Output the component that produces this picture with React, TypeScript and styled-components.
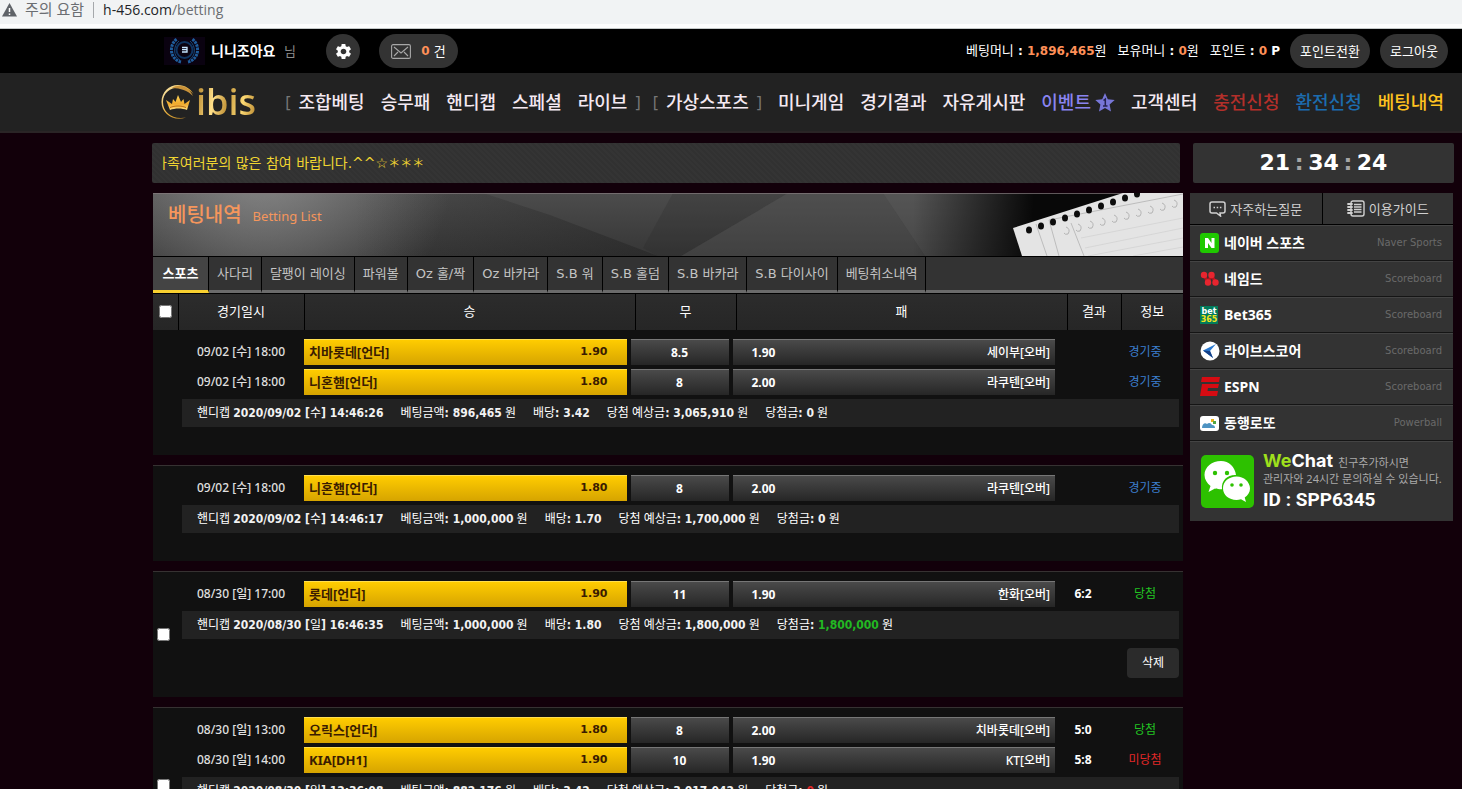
import React from "react";
import styled, { createGlobalStyle, css } from "styled-components";
import { MdSettings } from "react-icons/md";

const sans = `"Noto Sans", "Noto Sans CJK KR", sans-serif`;
const wide = `"DejaVu Sans", "Noto Sans CJK KR", sans-serif`;
const semiWide = `"DejaVu Sans Condensed", "Noto Sans CJK KR", sans-serif`;

const GlobalStyle = createGlobalStyle`
  * { box-sizing: border-box; }
  body {
    margin: 0;
    background: #12000a;
    color: #fff;
    font: 12px/16px ${sans};
  }
  button { font: inherit; color: inherit; border: 0; cursor: pointer; }
  a { color: inherit; text-decoration: none; }
  table { border-collapse: collapse; border-spacing: 0; }
  input[type="checkbox"] { width: 13px; height: 13px; margin: 0; display: block; }
`;

const Page = styled.div`
  height: 100vh;
  overflow: hidden;
  white-space: nowrap;
`;

/* ---------- address bar ---------- */

const AddressBar = styled.div`
  height: 29px;
  display: flex;
  align-items: center;
  padding: 0 0 9px 2px;
  background: linear-gradient(#f1f3f4 24px, #fdfdfd 24px);
  border-bottom: 1px solid #c4c8c8;
  color: #6b6e72;
  font-size: 14px;
  line-height: 19px;
`;

const Warning = styled.span`
  margin-left: 8px;
  padding-right: 9px;
  font-size: 15px;
`;

const Url = styled.span`
  border-left: 1px solid #a5a8ab;
  padding-left: 9px;
  line-height: 16px;
  font-family: "Open Sans", sans-serif;
  b { font-weight: 400; color: #222427; }
`;

/* ---------- top bar ---------- */

const TopBar = styled.div`
  height: 44px;
  display: flex;
  align-items: center;
  padding: 0 14px 0 164px;
  background: #000;
  font-size: 13px;
`;

const UserName = styled.div`
  margin-left: 6px;
  width: 115px;
  font-size: 14px;
  b { margin-right: 5px; }
  span { font-size: 13px; color: #8c8c8c; }
`;

const Pill = styled.button<{ $w: number }>`
  height: 34px;
  width: ${(p) => p.$w}px;
  padding: 0;
  border-radius: 17px;
  background: #333;
  display: flex;
  align-items: center;
  justify-content: center;
  gap: 4px;
`;

const Mail = styled(Pill)`
  margin-left: 19px;
  svg { margin-right: 6px; }
`;

const Orange = styled.b`
  font-family: ${wide};
  font-size: 12px;
  color: #ff9058;
`;

const Money = styled.div`
  margin-left: auto;
  margin-right: 10px;
  display: flex;
  gap: 11px;
  font-family: ${wide};
  b { font-size: 12px; }
`;

const Exit = styled(Pill)`
  margin-left: 10px;
`;

/* ---------- navigation ---------- */

const NavBar = styled.div`
  height: 60px;
  display: flex;
  align-items: center;
  justify-content: space-between;
  padding: 0 18px 0 160px;
  background: #222;
  border-bottom: 2px solid #2a2526;
`;

const Logo = styled.a`
  display: flex;
  align-items: center;
  gap: 1px;
  span {
    font: 600 36px/44px "Open Sans", sans-serif;
    background: linear-gradient(100deg, #b98a2f 5%, #ffe08a 30%, #c79a3f 50%, #fbd873 75%, #b3812a);
    -webkit-background-clip: text;
    background-clip: text;
    color: transparent;
  }
`;

const Menu = styled.nav`
  display: flex;
  align-items: center;
  gap: 16px;
  font-size: 18px;
  line-height: 24px;
`;

const MenuGroup = styled.div`
  display: flex;
  gap: 16px;
  &::before { content: "["; margin-right: -8px; color: #777; font-size: 16px; }
  &::after { content: "]"; margin-left: -8px; color: #777; font-size: 16px; }
  & + & { margin-left: -4px; }
`;

const MenuLink = styled.a<{ $color?: string }>`
  display: flex;
  align-items: center;
  gap: 4px;
  font-weight: 500;
  color: ${(p) => p.$color ?? "#f4e9f2"};
`;

/* ---------- page body ---------- */

const Body = styled.main`
  padding: 10px 8px 0 152px;
`;

const TopRow = styled.div`
  display: flex;
  gap: 13px;
  height: 40px;
`;

const Notice = styled.div`
  flex: 1;
  min-width: 0;
  padding: 0 10px;
  display: flex;
  align-items: center;
  border-radius: 2px;
  background: repeating-linear-gradient(45deg, #313131 0 2px, #343434 2px 4px);
  color: #f0d531;
  font: 14px/20px ${wide};
`;

const Marquee = styled.div`
  overflow: hidden;
  flex: 1;
  span { margin-left: -8px; }
  small { font-size: 12px; }
`;

const Clock = styled.time`
  width: 261px;
  border-radius: 2px;
  background: #333;
  display: flex;
  align-items: center;
  justify-content: center;
  gap: 5px;
  font: bold 22px/26px ${wide};
  i { font-style: normal; color: #a5a5a5; width: 8px; display: flex; justify-content: center; }
`;

const Columns = styled.div`
  display: flex;
  align-items: flex-start;
  gap: 7px;
  padding: 10px 1px 0;
`;

const Content = styled.section`
  flex: 1;
  min-width: 0;
`;

const Banner = styled.header`
  position: relative;
  height: 63px;
  padding: 10px 15px;
  display: flex;
  align-items: flex-start;
  gap: 11px;
  color: #f5965c;
  overflow: hidden;
  background: #333;
  h1 { margin: 0; font-size: 20px; line-height: 24px; font-weight: 500; }
  p { margin: 0; font-size: 13px; line-height: 26px; }
  h1, p { position: relative; }
  svg { position: absolute; inset: 0; width: 100%; height: 100%; }
`;

const Tabs = styled.div`
  display: flex;
  height: 38px;
  border-top: 1px solid #000;
  border-bottom: 1px solid #000;
  background: linear-gradient(#333 33px, #6b6b6b 33px);
  font: 13px/16px ${wide};
`;

const Tab = styled.button<{ $active?: boolean }>`
  padding: 0 8px;
  background: transparent;
  border-right: 1px solid #000;
  border-bottom: 3px solid transparent;
  color: #c4c4c4;
  ${(p) =>
    p.$active &&
    css`
      min-width: 56px;
      background: #444;
      color: #fff;
      font-weight: 700;
      border-bottom-color: #f8d030;
    `}
`;

const HeadTable = styled.table`
  width: 100%;
  table-layout: fixed;
  background: linear-gradient(#2c2c2c, #262626);
  font-size: 13px;
  th {
    height: 36px;
    padding: 0 0 2px;
    font-weight: 400;
    border-right: 1px solid #000;
  }
  th:first-child { padding: 0 0 2px 6px; }
  th:last-child { border-right: 0; }
`;

const Col = styled.col<{ $w?: number }>`
  ${(p) => p.$w && `width: ${p.$w}px;`}
`;

const Bet = styled.article<{ $first?: boolean }>`
  display: flex;
  align-items: center;
  margin-bottom: 10px;
  padding: 9px 4px 0;
  border-top: ${(p) => (p.$first ? "0" : "1px solid #363232")};
  background: #111;
`;

const Picker = styled.div`
  width: 25px;
  flex: none;
  padding-bottom: 9px;
`;

const BetBody = styled.div`
  flex: 1;
  min-width: 0;
`;

const Games = styled.table`
  display: block;
  tbody { display: grid; gap: 4px; }
  tr {
    display: grid;
    grid-template-columns: 118px minmax(0, 1fr) 98px minmax(0, 1fr) 48px 68px;
    gap: 4px;
    height: 26px;
  }
  td {
    padding: 0;
    display: flex;
    align-items: center;
    justify-content: center;
  }
`;

const When = styled.td`
  && { justify-content: flex-start; padding-left: 15px; }
  font-weight: 500;
  color: #e0e0e0;
`;

const pickPadding = css<{ $away?: boolean }>`
  && { justify-content: space-between; padding: ${(p) => (p.$away ? "0 5px 0 19px" : "0 19px 2px 5px")}; }
`;

const Pick = styled.td<{ $away?: boolean }>`
  ${pickPadding}
  ${(p) =>
    p.$away
      ? css`
          background: linear-gradient(#4a4a4a, #262626);
          border-top: 1px solid #777;
          span { font-weight: 500; }
        `
      : css`
          background: linear-gradient(#ffcc00, #d6a400);
          border-top: 1px solid #ffdf50;
          color: #3a1c00;
          font-size: 13px;
          font-weight: 700;
          b { font-family: ${wide}; font-size: 11px; }
        `}
`;

const Draw = styled.td`
  background: linear-gradient(#4a4a4a, #262626);
  border-top: 1px solid #777;
  font-weight: 700;
`;

const Score = styled.td`
  font-weight: 700;
`;

const statusColor: Record<string, string> = { 경기중: "#3c7fd0", 당첨: "#22c322", 미당첨: "#e02828" };

const Status = styled.td<{ $status: string }>`
  color: ${(p) => statusColor[p.$status]};
`;

const Info = styled.div`
  display: flex;
  align-items: center;
  gap: 17px;
  height: 28px;
  margin-top: 4px;
  padding-left: 15px;
  background: #222;
`;

const Won = styled.b<{ $color?: string }>`
  font-family: ${semiWide};
  color: ${(p) => p.$color ?? "#f2f2f2"};
`;

const Footer = styled.div<{ $tall?: boolean }>`
  height: ${(p) => (p.$tall ? 58 : 28)}px;
  padding-top: 9px;
  display: flex;
  justify-content: flex-end;
  align-items: flex-start;
`;

const Delete = styled.button`
  width: 52px;
  height: 30px;
  border-radius: 4px;
  background: #2b2b2b;
`;

/* ---------- side column ---------- */

const Side = styled.aside`
  width: 263px;
  background: #333;
`;

const Help = styled.div`
  display: grid;
  grid-template-columns: 1fr 1fr;
  height: 32px;
  border-bottom: 1px solid #000;
  font-size: 13px;
  color: #d0d0d0;
`;

const HelpLink = styled.a`
  display: flex;
  align-items: center;
  justify-content: center;
  gap: 4px;
  & + & { border-left: 1px solid #000; }
`;

const SiteLink = styled.a`
  display: flex;
  align-items: center;
  gap: 4px;
  height: 36px;
  padding: 0 11px 0 10px;
  border-top: 1px solid #444;
  border-bottom: 1px solid #151515;
  b { font-size: 14px; }
  small { margin-left: auto; font: 10px/14px ${wide}; color: #6a6a6a; }
`;

const WeChat = styled.div`
  display: flex;
  align-items: center;
  gap: 9px;
  height: 80px;
  padding: 0 11px;
  border-top: 1px solid #444;
  color: #aaa;
  font-size: 11px;
  line-height: 16px;
`;

const Brand = styled.div`
  display: flex;
  align-items: baseline;
  gap: 5px;
  b { font: 700 18px/20px Inter, sans-serif; color: #fff; }
  b span { color: #9fe01c; }
`;

const WeId = styled.div`
  font: bold 19px/26px Roboto, sans-serif;
  color: #fff;
`;

/* ---------- drawings ---------- */

const Crest = () => (
  <svg width="41" height="28" viewBox="0 0 41 28">
    <rect width="41" height="28" fill="#0a0210" />
    <g fill="none" stroke="#1f5d9c">
      <circle cx="20.500" cy="13" r="8" strokeWidth="2" stroke="#0f3460" />
      <path d="M17 25C5 22 5 7 13 2M24 25C36 22 36 7 28 2" strokeWidth="3" strokeDasharray="2.500 .8" />
      <path d="M16 23C9 19 9 9 15 4M25 23C32 19 32 9 26 4" strokeWidth="1" stroke="#17497c" />
    </g>
    <path d="M18 10.500h5v4.500h-5M18 12.700h5" fill="none" stroke="#c7e6ff" strokeWidth="1.300" />
  </svg>
);

const Envelope = () => (
  <svg width="20" height="15" viewBox="0 0 20 15" fill="none" stroke="#a8a8a8" strokeWidth="1.100">
    <rect x=".6" y=".6" width="18.800" height="13.800" rx="1.500" />
    <path d="M3 3l7 6 7-6M3 12l4-4M17 12l-4-4" />
  </svg>
);

const Crown = () => (
  <svg width="35" height="36" viewBox="0 0 35 36">
    <defs>
      <linearGradient id="gold" x1="0" y1="0" x2="1" y2="1">
        <stop offset="0" stopColor="#fff3c0" />
        <stop offset=".5" stopColor="#e5ac3a" />
        <stop offset="1" stopColor="#9a6a1e" />
      </linearGradient>
      <linearGradient id="crown" x1="0" y1="0" x2="0" y2="1">
        <stop offset="0" stopColor="#ffd75a" />
        <stop offset=".6" stopColor="#f0a92c" />
        <stop offset="1" stopColor="#ffdf80" />
      </linearGradient>
    </defs>
    <path d="M26 33.500C14 38 1.500 30 1.500 18 1.500 8 9 1 18 1c7 0 13 4 15.500 9C29 5 24 3.500 19 3.500 10 3.500 3 9 3 18c0 10 9 18 23 15.500z" fill="url(#gold)" />
    <path d="M12 4c6-4 16-3 21 8-6-6-12-7.500-21-8z" fill="#c9923a" />
    <path d="M10 26L6 16l6 4 1-5 2.500 3L18 11l3 7 2.500-3 1 5 5.500-4-3 10c-5-2-12-2-17 0z" fill="url(#crown)" />
    <path d="M10 23.500c5-2 11-2 16 0" stroke="#b76b12" fill="none" />
  </svg>
);

const Star = () => (
  <svg width="20" height="19" viewBox="0 0 20 19">
    <path d="M10 0l2.800 6.200 6.900.8-5.100 4.600 1.400 6.800-6-3.400-6 3.400 1.400-6.800L.3 7l6.900-.8z" fill="#7877d8" />
    <path d="M8.500 7.500L10.300 6v7M8 13h4.500" stroke="#25234f" strokeWidth="1.500" fill="none" />
  </svg>
);

const Bubble = () => (
  <svg width="17" height="16" viewBox="0 0 17 16" fill="none" stroke="#d0d0d0" strokeWidth="1.500">
    <path d="M3 1h11a2 2 0 0 1 2 2v7a2 2 0 0 1-2 2h-3l.5 3-4-3H3a2 2 0 0 1-2-2V3a2 2 0 0 1 2-2z" />
    <path d="M4.500 6.500h8" strokeDasharray="1.500 1.700" />
  </svg>
);

const Notebook = () => (
  <svg width="18" height="17" viewBox="0 0 18 17" fill="none" stroke="#d0d0d0" strokeWidth="1.400">
    <rect x="4" y="1" width="13" height="15" rx="2" />
    <path d="M7 4.500h7.500M7 7h7.500M7 9.500h7.500M7 12h7.500" strokeWidth="1.400" />
    <path d="M1 4h4M1 7h4M1 10h4M1 13h4" strokeWidth="1.800" strokeLinecap="round" />
  </svg>
);

const PaperBanner = () => (
  <svg viewBox="0 0 1030 63" preserveAspectRatio="xMaxYMid slice" aria-hidden="true">
    <defs>
      <radialGradient id="glow" gradientUnits="userSpaceOnUse" cx="110" cy="-30" r="190">
        <stop offset="0" stopColor="#a0a0a0" stopOpacity=".7" />
        <stop offset="1" stopColor="#a0a0a0" stopOpacity="0" />
      </radialGradient>
      <linearGradient id="base" x1="0" y1="0" x2="0" y2="1">
        <stop offset="0" stopColor="#4c4c4c" />
        <stop offset="1" stopColor="#363636" />
      </linearGradient>
      <linearGradient id="night" x1="0" x2="1">
        <stop offset="0" stopColor="#000" stopOpacity="0" />
        <stop offset="1" stopColor="#000" stopOpacity=".9" />
      </linearGradient>
      <linearGradient id="shade" x1="0" x2="1">
        <stop offset="0" stopColor="#1c1c1c" stopOpacity="0" />
        <stop offset="1" stopColor="#1c1c1c" stopOpacity=".4" />
      </linearGradient>
    </defs>
    <rect width="1030" height="63" fill="url(#base)" />
    <rect width="1030" height="63" fill="url(#glow)" />
    <path d="M200 0h130L397 22 505 63H200z" fill="url(#shade)" />
    <path d="M528 63L635 0h95l42 63z" fill="#555" opacity=".35" />
    <path d="M730 0h150v63H772z" fill="#666" opacity=".35" />
    <path d="M505 63L528 63 635 0H520L490 55z" fill="#222" opacity=".2" />
    <rect x="760" width="120" height="63" fill="url(#night)" />
    <rect x="880" width="150" height="63" fill="#080808" />
    <rect width="1030" height="1" fill="#857b7d" opacity=".7" />
    <path d="M860 35L970 0h60v63H869z" fill="#e4e4e4" />
    <path d="M883 31l11 32M896 27l10 36M918 30l13 33M896 27L1030 1" stroke="#bcbcbc" fill="none" />
    <path d="M932 55l98-20M935 63l95-18M928 45l102-20M980 63l50-9" stroke="#d6d6d6" fill="none" />
    {[0, 1, 2, 3, 4, 5, 6, 7, 8, 9].map((i) => (
      <ellipse key={i} cx={876 + i * 12} cy={37 - i * 4} rx="3" ry="3.500" fill="#0c0c0c" />
    ))}
    {[0, 1, 2, 3, 4, 5, 6, 7, 8, 9].map((i) => (
      <path key={i} d={`M${913 + i * 12} ${34 - i * 3}q5 2 2 7q-3 1-4-1`} stroke="#b4b4b4" fill="none" />
    ))}
  </svg>
);

const Tile = ({ children }: { children: React.ReactNode }) => (
  <svg width="20" height="20" viewBox="0 0 20 20">{children}</svg>
);

const siteIcons = {
  naver: (
    <Tile>
      <rect width="19" height="20" rx="3" fill="#1fc800" />
      <path d="M5 15V5h3l3.500 5V5h3v10h-3L8 10v5z" fill="#fff" />
    </Tile>
  ),
  named: (
    <Tile>
      <path d="M4 6l4 7.500M11.500 6l4 7.500M8 13.500L11.500 6" stroke="#b5141e" strokeWidth="3" />
      <g fill="#e8252f">
        <circle cx="4" cy="6" r="3.200" />
        <circle cx="11.500" cy="6" r="3.200" />
        <circle cx="8" cy="13.500" r="3.200" />
        <circle cx="15.500" cy="13.500" r="3.200" />
      </g>
    </Tile>
  ),
  bet: (
    <Tile>
      <rect y="1" width="18" height="18" fill="#027b5b" />
      <text x="9" y="9" textAnchor="middle" fontFamily="DejaVu Sans" fontWeight="bold" fontSize="8" fill="#fff">bet</text>
      <text x="9" y="17" textAnchor="middle" fontFamily="DejaVu Sans" fontWeight="bold" fontSize="8" fill="#f2e21b">365</text>
    </Tile>
  ),
  live: (
    <Tile>
      <circle cx="10" cy="10" r="9.500" fill="#fff" />
      <path d="M16 3L3 9.500 13 17l-3-7z" fill="#2b7ad0" />
      <path d="M3 9.500L13 17l-3-7z" fill="#143f86" />
    </Tile>
  ),
  espn: (
    <Tile>
      <path d="M2 0h18l-1 5H1zM2 7h17l-1 4H8l-.5 3H18l-1 5H0z" fill="#d60b12" />
    </Tile>
  ),
  lotto: (
    <Tile>
      <rect y="3" width="19" height="15" rx="3" fill="#fff" />
      <path d="M2 15c0-4 3-6 5-4 2-2 4-1 5 1 2 0 3 1 3 3z" fill="#4e93c2" />
      <rect x="11" y="6" width="3" height="3" fill="#e7b21c" />
      <rect x="13" y="8" width="3" height="3" fill="#4fa545" />
    </Tile>
  ),
};

const WeChatIcon = () => (
  <svg width="53" height="53" viewBox="0 0 53 53">
    <rect width="53" height="53" rx="5" fill="#2dc100" />
    <path d="M20 6C11 6 3.500 12 3.500 20c0 4.500 2.500 8 6 11l-2 6 6.500-3.500c2 .6 4 .8 7 .8C20 25 27 19.500 35 20 34 12 28 6 20 6z" fill="#fff" />
    <path d="M35.500 21.500c-7.500 0-13.500 5-13.500 11.800S28 45 35.500 45c1.500 0 3-.3 4.500-.7l5 2.700-1.300-4.500c3.300-2.300 5.300-5.300 5.300-9C49 27 43 21.500 35.500 21.500z" fill="#fff" />
    <g fill="#2dc100">
      <circle cx="14" cy="18" r="2.200" />
      <circle cx="26" cy="18" r="2.200" />
      <circle cx="31" cy="30" r="1.800" />
      <circle cx="40" cy="30" r="1.800" />
    </g>
  </svg>
);

/* ---------- data ---------- */

const tabs = ["스포츠", "사다리", "달팽이 레이싱", "파워볼", "Oz 홀/짝", "Oz 바카라", "S.B 워", "S.B 홀덤", "S.B 바카라", "S.B 다이사이", "베팅취소내역"];

type Game = { date: string; day: string; time: string; home: string; homeOdds: string; draw: string; awayOdds: string; away: string; score?: string; status: string };
type BetData = { games: Game[]; date: string; day: string; time: string; stake: string; odds: string; expected: string; payout: string; color?: string; done?: boolean };

const g = (date: string, day: string, time: string, home: string, homeOdds: string, draw: string, awayOdds: string, away: string, status: string, score?: string): Game => ({
  date, day, time, home, homeOdds, draw, awayOdds, away, status, score,
});

const bets: BetData[] = [
  {
    games: [
      g("09/02", "수", "18:00", "치바롯데[언더]", "1.90", "8.5", "1.90", "세이부[오버]", "경기중"),
      g("09/02", "수", "18:00", "니혼햄[언더]", "1.80", "8", "2.00", "라쿠텐[오버]", "경기중"),
    ],
    date: "2020/09/02", day: "수", time: "14:46:26", stake: "896,465", odds: "3.42", expected: "3,065,910", payout: "0",
  },
  {
    games: [g("09/02", "수", "18:00", "니혼햄[언더]", "1.80", "8", "2.00", "라쿠텐[오버]", "경기중")],
    date: "2020/09/02", day: "수", time: "14:46:17", stake: "1,000,000", odds: "1.70", expected: "1,700,000", payout: "0",
  },
  {
    games: [g("08/30", "일", "17:00", "롯데[언더]", "1.90", "11", "1.90", "한화[오버]", "당첨", "6:2")],
    date: "2020/08/30", day: "일", time: "16:46:35", stake: "1,000,000", odds: "1.80", expected: "1,800,000", payout: "1,800,000", color: "#22b822", done: true,
  },
  {
    games: [
      g("08/30", "일", "13:00", "오릭스[언더]", "1.80", "8", "2.00", "치바롯데[오버]", "당첨", "5:0"),
      g("08/30", "일", "14:00", "KIA[DH1]", "1.90", "10", "1.90", "KT[오버]", "미당첨", "5:8"),
    ],
    date: "2020/08/30", day: "일", time: "12:36:08", stake: "882,176", odds: "3.42", expected: "3,017,042", payout: "0", color: "#e02828", done: true,
  },
];

const sites: [keyof typeof siteIcons, string, string][] = [
  ["naver", "네이버 스포츠", "Naver Sports"],
  ["named", "네임드", "Scoreboard"],
  ["bet", "Bet365", "Scoreboard"],
  ["live", "라이브스코어", "Scoreboard"],
  ["espn", "ESPN", "Scoreboard"],
  ["lotto", "동행로또", "Powerball"],
];

const BetCard = ({ bet, first }: { bet: BetData; first: boolean }) => (
  <Bet $first={first}>
    <Picker>{bet.done && <input type="checkbox" aria-label={`${bet.date} ${bet.time} 선택`} />}</Picker>
    <BetBody>
      <Games>
        <tbody>
          {bet.games.map((game, i) => (
            <tr key={i}>
              <When>{`${game.date} [${game.day}] ${game.time}`}</When>
              <Pick><span>{game.home}</span><b>{game.homeOdds}</b></Pick>
              <Draw>{game.draw}</Draw>
              <Pick $away><b>{game.awayOdds}</b><span>{game.away}</span></Pick>
              <Score>{game.score}</Score>
              <Status $status={game.status}>{game.status}</Status>
            </tr>
          ))}
        </tbody>
      </Games>
      <Info>
        <span>핸디캡 <Won>{bet.date} [</Won>{bet.day}<Won>] {bet.time}</Won></span>
        <span>베팅금액<Won>: {bet.stake}</Won> 원</span>
        <span>배당<Won>: {bet.odds}</Won></span>
        <span>당첨 예상금<Won>: {bet.expected}</Won> 원</span>
        <span>당첨금<Won>: </Won><Won $color={bet.color}>{bet.payout}</Won> 원</span>
      </Info>
      <Footer $tall={bet.done}>{bet.done && <Delete type="button">삭제</Delete>}</Footer>
    </BetBody>
  </Bet>
);

export default function App() {
  return (
    <Page>
      <GlobalStyle />
      <AddressBar>
        <svg width="15" height="14" viewBox="0 0 15 14" aria-hidden="true">
          <path d="M7.500 0L15 13.500H0z" fill="#5f6368" />
          <path d="M7.500 5v4M7.500 10.500v1.500" stroke="#fff" strokeWidth="1.500" />
        </svg>
        <Warning>주의 요함</Warning>
        <Url><b>h-456.com</b>/betting</Url>
      </AddressBar>

      <TopBar>
        <Crest />
        <UserName><b>니니조아요</b> <span>님</span></UserName>
        <Pill type="button" $w={34} aria-label="설정"><MdSettings size={19} /></Pill>
        <Mail type="button" $w={79}><Envelope /><Orange>0</Orange>건</Mail>
        <Money>
          <span>베팅머니 <b>:</b> <Orange>1,896,465</Orange>원</span>
          <span>보유머니 <b>:</b> <Orange>0</Orange>원</span>
          <span>포인트 <b>:</b> <Orange>0</Orange> <b>P</b></span>
        </Money>
        <Pill type="button" $w={80}>포인트전환</Pill>
        <Exit type="button" $w={68}>로그아웃</Exit>
      </TopBar>

      <NavBar>
        <Logo href="#"><Crown /><span>ibis</span></Logo>
        <Menu>
          <MenuGroup>
            {["조합베팅", "승무패", "핸디캡", "스페셜", "라이브"].map((t) => <MenuLink key={t} href="#">{t}</MenuLink>)}
          </MenuGroup>
          <MenuGroup><MenuLink href="#">가상스포츠</MenuLink></MenuGroup>
          <MenuLink href="#">미니게임</MenuLink>
          <MenuLink href="#">경기결과</MenuLink>
          <MenuLink href="#">자유게시판</MenuLink>
          <MenuLink href="#" $color="#8a84f0">이벤트 <Star /></MenuLink>
          <MenuLink href="#">고객센터</MenuLink>
          <MenuLink href="#" $color="#b32f2a">충전신청</MenuLink>
          <MenuLink href="#" $color="#1c6cae">환전신청</MenuLink>
          <MenuLink href="#" $color="#ffc31f">베팅내역</MenuLink>
        </Menu>
      </NavBar>

      <Body>
        <TopRow>
          <Notice><Marquee><span>가족여러분의 많은 참여 바랍니다.^^☆<small>＊＊＊</small></span></Marquee></Notice>
          <Clock><span>21</span><i>:</i><span>34</span><i>:</i><span>24</span></Clock>
        </TopRow>

        <Columns>
          <Content>
            <Banner>
              <PaperBanner />
              <h1>베팅내역</h1>
              <p>Betting List</p>
            </Banner>
            <Tabs>
              {tabs.map((t, i) => <Tab key={t} type="button" $active={i === 0}>{t}</Tab>)}
            </Tabs>
            <HeadTable>
              <colgroup>
                <Col $w={25} /><Col $w={126} /><Col /><Col $w={101} /><Col /><Col $w={54} /><Col $w={62} />
              </colgroup>
              <thead>
                <tr>
                  <th><input type="checkbox" aria-label="전체 선택" /></th>
                  <th>경기일시</th><th>승</th><th>무</th><th>패</th><th>결과</th><th>정보</th>
                </tr>
              </thead>
            </HeadTable>
            {bets.map((bet, i) => <BetCard key={i} bet={bet} first={i === 0} />)}
          </Content>

          <Side>
            <Help>
              <HelpLink href="#"><Bubble />자주하는질문</HelpLink>
              <HelpLink href="#"><Notebook />이용가이드</HelpLink>
            </Help>
            {sites.map(([icon, name, note]) => (
              <SiteLink key={name} href="#">{siteIcons[icon]}<b>{name}</b><small>{note}</small></SiteLink>
            ))}
            <WeChat>
              <WeChatIcon />
              <div>
                <Brand><b><span>We</span>Chat</b>친구추가하시면</Brand>
                <div>관리자와 24시간 문의하실 수 있습니다.</div>
                <WeId>ID : SPP6345</WeId>
              </div>
            </WeChat>
          </Side>
        </Columns>
      </Body>
    </Page>
  );
}
